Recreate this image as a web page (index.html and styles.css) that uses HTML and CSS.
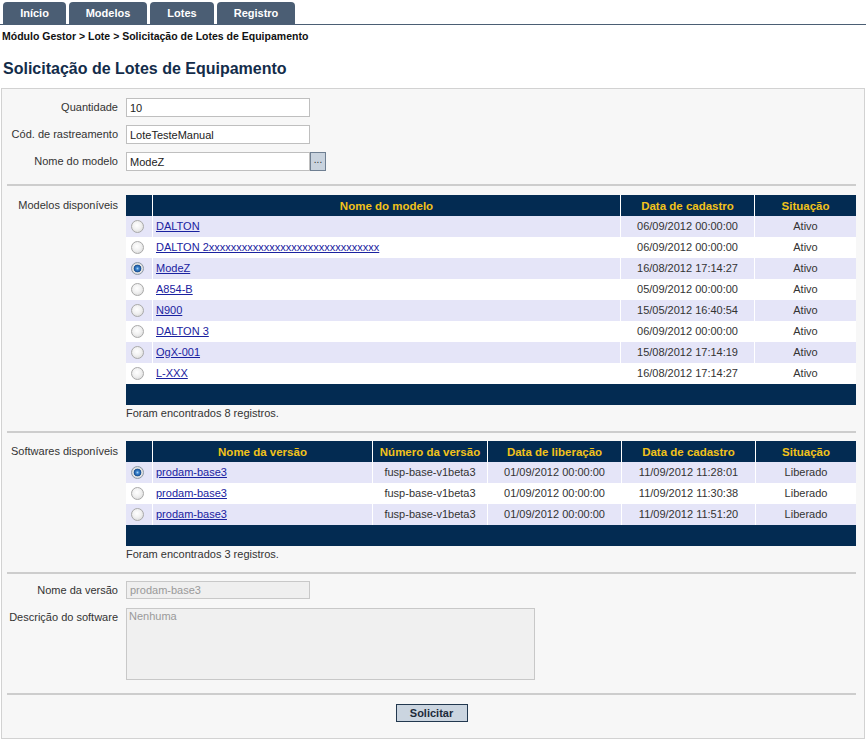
FILE: index.html
```html
<!DOCTYPE html>
<html lang="pt-BR">
<head>
<meta charset="utf-8">
<title>Solicitação de Lotes de Equipamento</title>
<link rel="stylesheet" href="styles.css">
</head>
<body>
<nav class="tabs">
  <a class="tab tab-1" href="#">Início</a>
  <a class="tab tab-2" href="#">Modelos</a>
  <a class="tab tab-3" href="#">Lotes</a>
  <a class="tab tab-4" href="#">Registro</a>
</nav>
<div class="crumb">Módulo Gestor &gt; Lote &gt; Solicitação de Lotes de Equipamento</div>
<h1 class="title">Solicitação de Lotes de Equipamento</h1>

<div class="panel">
  <div class="form">
    <div class="row"><label class="lbl">Quantidade</label><input class="txt" type="text" value="10"></div>
    <div class="row"><label class="lbl">Cód. de rastreamento</label><input class="txt" type="text" value="LoteTesteManual"></div>
    <div class="row"><label class="lbl">Nome do modelo</label><input class="txt" type="text" value="ModeZ"><button class="browse" type="button">...</button></div>
  </div>

  <div class="sep sep-a"></div>

  <div class="block block-a">
    <div class="lbl lbl-top">Modelos disponíveis</div>
    <div class="grid-wrap">
      <table class="grid">
        <colgroup><col class="c-radio"><col class="c-m-name"><col class="c-date"><col class="c-m-sit"></colgroup>
        <thead><tr><th></th><th>Nome do modelo</th><th>Data de cadastro</th><th>Situação</th></tr></thead>
        <tbody>
          <tr class="alt"><td class="rc"><input class="radio" type="radio" name="modelo"></td><td class="name"><a href="#">DALTON</a></td><td>06/09/2012 00:00:00</td><td>Ativo</td></tr>
          <tr><td class="rc"><input class="radio" type="radio" name="modelo"></td><td class="name"><a href="#">DALTON 2xxxxxxxxxxxxxxxxxxxxxxxxxxxxxxx</a></td><td>06/09/2012 00:00:00</td><td>Ativo</td></tr>
          <tr class="alt"><td class="rc"><input class="radio" type="radio" name="modelo" checked></td><td class="name"><a href="#">ModeZ</a></td><td>16/08/2012 17:14:27</td><td>Ativo</td></tr>
          <tr><td class="rc"><input class="radio" type="radio" name="modelo"></td><td class="name"><a href="#">A854-B</a></td><td>05/09/2012 00:00:00</td><td>Ativo</td></tr>
          <tr class="alt"><td class="rc"><input class="radio" type="radio" name="modelo"></td><td class="name"><a href="#">N900</a></td><td>15/05/2012 16:40:54</td><td>Ativo</td></tr>
          <tr><td class="rc"><input class="radio" type="radio" name="modelo"></td><td class="name"><a href="#">DALTON 3</a></td><td>06/09/2012 00:00:00</td><td>Ativo</td></tr>
          <tr class="alt"><td class="rc"><input class="radio" type="radio" name="modelo"></td><td class="name"><a href="#">OgX-001</a></td><td>15/08/2012 17:14:19</td><td>Ativo</td></tr>
          <tr><td class="rc"><input class="radio" type="radio" name="modelo"></td><td class="name"><a href="#">L-XXX</a></td><td>16/08/2012 17:14:27</td><td>Ativo</td></tr>
        </tbody>
        <tfoot><tr><td colspan="4"></td></tr></tfoot>
      </table>
      <div class="count">Foram encontrados 8 registros.</div>
    </div>
  </div>

  <div class="sep sep-b"></div>

  <div class="block block-b">
    <div class="lbl lbl-top">Softwares disponíveis</div>
    <div class="grid-wrap">
      <table class="grid">
        <colgroup><col class="c-radio"><col class="c-s-name"><col class="c-s-num"><col class="c-date"><col class="c-date"><col class="c-s-sit"></colgroup>
        <thead><tr><th></th><th>Nome da versão</th><th>Número da versão</th><th>Data de liberação</th><th>Data de cadastro</th><th>Situação</th></tr></thead>
        <tbody>
          <tr class="alt"><td class="rc"><input class="radio" type="radio" name="soft" checked></td><td class="name"><a href="#">prodam-base3</a></td><td>fusp-base-v1beta3</td><td>01/09/2012 00:00:00</td><td>11/09/2012 11:28:01</td><td>Liberado</td></tr>
          <tr><td class="rc"><input class="radio" type="radio" name="soft"></td><td class="name"><a href="#">prodam-base3</a></td><td>fusp-base-v1beta3</td><td>01/09/2012 00:00:00</td><td>11/09/2012 11:30:38</td><td>Liberado</td></tr>
          <tr class="alt"><td class="rc"><input class="radio" type="radio" name="soft"></td><td class="name"><a href="#">prodam-base3</a></td><td>fusp-base-v1beta3</td><td>01/09/2012 00:00:00</td><td>11/09/2012 11:51:20</td><td>Liberado</td></tr>
        </tbody>
        <tfoot><tr><td colspan="6"></td></tr></tfoot>
      </table>
      <div class="count">Foram encontrados 3 registros.</div>
    </div>
  </div>

  <div class="sep sep-c"></div>

  <div class="form form-b">
    <div class="row"><label class="lbl">Nome da versão</label><input class="txt txt-dis" type="text" value="prodam-base3" disabled></div>
    <div class="row row-top"><label class="lbl lbl-area">Descrição do software</label><textarea class="area" disabled>Nenhuma</textarea></div>
  </div>

  <div class="sep sep-d"></div>

  <div class="actions"><button class="submit" type="button">Solicitar</button></div>
</div>
</body>
</html>
```

FILE: styles.css
```css
html, body {
  margin: 0;
  padding: 0;
  background: #ffffff;
}
body {
  font-family: "Liberation Sans", Arial, sans-serif;
  font-size: 11px;
  color: #333333;
}

/* tabs */
.tabs {
  display: flex;
  gap: 3px;
  padding: 2px 0 0 3px;
  border-bottom: 1px solid #4b5e74;
  height: 22px;
}
.tab {
  display: flex;
  align-items: center;
  justify-content: center;
  height: 22px;
  background: #4b5e74;
  color: #ffffff;
  font-weight: bold;
  font-size: 11px;
  text-decoration: none;
  border-radius: 4px 4px 0 0;
}
.tab-1 { width: 63px; }
.tab-2 { width: 78px; }
.tab-3 { width: 64px; }
.tab-4 { width: 78px; }

.crumb {
  margin: 5px 0 0 2px;
  font-size: 10.5px;
  font-weight: bold;
  line-height: 13px;
  color: #111111;
}
.title {
  margin: 17px 0 0 3px;
  font-size: 16px;
  line-height: 18px;
  font-weight: bold;
  color: #132c4a;
}

/* panel */
.panel {
  box-sizing: border-box;
  width: 864px;
  margin: 10px 0 0 1px;
  border: 1px solid #d2d2d2;
  background: #f7f7f7;
  padding: 9px 8px 16px 0;
}

.form {
  display: flex;
  flex-direction: column;
  gap: 8px;
}
.row {
  display: flex;
  align-items: center;
}
.row-top { align-items: flex-start; }
.lbl {
  width: 116px;
  margin-right: 8px;
  text-align: right;
  line-height: 13px;
  color: #333333;
  flex: none;
}
.txt {
  box-sizing: border-box;
  width: 184px;
  height: 19px;
  margin: 0;
  padding: 0 3px;
  border: 1px solid #bfbfbf;
  background: #ffffff;
  font-family: "Liberation Sans", Arial, sans-serif;
  font-size: 11px;
  color: #222222;
}
.browse {
  box-sizing: border-box;
  width: 16px;
  height: 19px;
  margin: 0;
  padding: 0 0 3px;
  border: 1px solid #6f7f92;
  background: #c9d3de;
  font-family: "Liberation Sans", Arial, sans-serif;
  font-size: 10px;
  line-height: 10px;
  color: #333333;
}

.sep {
  height: 2px;
  margin-left: 5px;
  background: #cdcdcd;
}
.sep-a { margin-top: 13px; }
.sep-b { margin-top: 11px; }
.sep-c { margin-top: 11px; }
.sep-d { margin-top: 13px; }

.block {
  display: flex;
  align-items: flex-start;
}
.block-a { margin-top: 9px; }
.block-b { margin-top: 8px; }
.lbl-top { padding-top: 4px; }

.grid-wrap { width: 730px; }
.grid {
  width: 730px;
  table-layout: fixed;
  border-collapse: separate;
  border-spacing: 0;
}
.c-radio { width: 26px; }
.c-m-name { width: 468px; }
.c-date { width: 134px; }
.c-m-sit { width: 102px; }
.c-s-name { width: 220px; }
.c-s-num { width: 115px; }
.c-s-sit { width: 101px; }

.grid th {
  height: 21px;
  padding: 0;
  background: #032b52;
  color: #f2c21a;
  font-size: 11.5px;
  font-weight: bold;
  text-align: center;
  border-left: 1px solid #ffffff;
}
.grid th:first-child { border-left: 0; }
.grid td {
  height: 21px;
  padding: 0;
  line-height: 13px;
  text-align: center;
  color: #333333;
  background: #ffffff;
  border-left: 1px solid #ffffff;
  white-space: nowrap;
  overflow: hidden;
}
.grid td:first-child { border-left: 0; }
.grid tr.alt td { background: #e5e5f8; }
.grid td.name {
  text-align: left;
  padding-left: 3px;
}
.grid td.name a {
  color: #1a22a0;
  text-decoration: underline;
}
.grid td.rc {
  text-align: left;
  padding-left: 5px;
}
.grid tfoot td {
  height: 21px;
  background: #032b52;
}

.radio {
  appearance: none;
  -webkit-appearance: none;
  box-sizing: border-box;
  display: block;
  width: 13px;
  height: 13px;
  margin: 0;
  border-radius: 50%;
  border: 1px solid #a9a9a9;
  background: radial-gradient(circle at 45% 40%, #ffffff 0, #f1f1f1 45%, #d2d2d2 100%);
}
.radio:checked {
  border-color: #8e9aa8;
  background: radial-gradient(circle at 50% 50%, #a9d3f5 0, #3d86d0 1.5px, #174c8f 3.5px, #e4e4e4 4.2px, #d0d0d0 100%);
}

.count {
  margin-top: 2px;
  line-height: 13px;
  color: #333333;
}

.form-b {
  margin-top: 7px;
  gap: 9px;
}
.txt-dis {
  height: 18px;
  background: #efefef;
  border-color: #c8c8c8;
  color: #9a9a9a;
}
.lbl-area { padding-top: 3px; }
.area {
  box-sizing: border-box;
  width: 409px;
  height: 72px;
  margin: 0;
  padding: 1px 2px;
  border: 1px solid #c8c8c8;
  background: #f0f0f0;
  font-family: "Liberation Sans", Arial, sans-serif;
  font-size: 11px;
  line-height: 13px;
  color: #9a9a9a;
  resize: none;
}

.actions {
  display: flex;
  justify-content: center;
  padding-left: 5px;
  margin-top: 9px;
}
.submit {
  box-sizing: border-box;
  width: 72px;
  height: 18px;
  margin: 0;
  padding: 0;
  border: 1px solid #22384f;
  background: #cbd5e0;
  font-family: "Liberation Sans", Arial, sans-serif;
  font-size: 11px;
  font-weight: bold;
  color: #1d2b3b;
}
```
